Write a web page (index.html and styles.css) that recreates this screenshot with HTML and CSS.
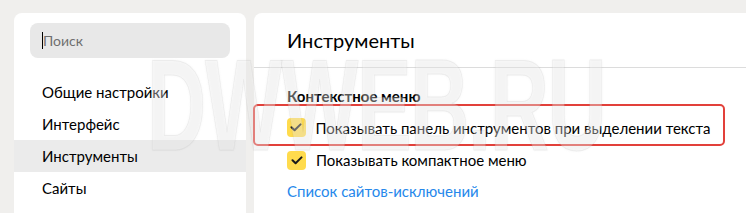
FILE: index.html
```html
<!DOCTYPE html>
<html lang="ru">
<head>
<meta charset="utf-8">
<link rel="stylesheet" href="styles.css">
</head>
<body>
<div class="page">
  <aside class="side">
    <div class="search"><span class="caret"></span><span class="ph">Поиск</span></div>
    <nav class="menu">
      <div class="item">Общие настройки</div>
      <div class="item">Интерфейс</div>
      <div class="item active">Инструменты</div>
      <div class="item">Сайты</div>
    </nav>
  </aside>
  <main class="main">
    <h1 class="title">Инструменты</h1>
    <div class="section">
      <h2 class="sub">Контекстное меню</h2>
      <div class="highlight">
        <label class="opt"><span class="cb"><svg width="12" height="9" viewBox="0 0 12 9"><path d="M1.5 4.2 L4.6 7.2 L10.5 1.4" fill="none" stroke="#1a1a1a" stroke-width="2" stroke-linecap="round" stroke-linejoin="round"/></svg></span>Показывать панель инструментов при выделении текста</label>
      </div>
      <label class="opt second"><span class="cb"><svg width="12" height="9" viewBox="0 0 12 9"><path d="M1.5 4.2 L4.6 7.2 L10.5 1.4" fill="none" stroke="#1a1a1a" stroke-width="2" stroke-linecap="round" stroke-linejoin="round"/></svg></span>Показывать компактное меню</label>
      <a class="link" href="#">Список сайтов-исключений</a>
    </div>
  </main>
  <div class="wm" aria-hidden="true">DWWEB.RU</div>
</div>
</body>
</html>
```
FILE: styles.css
```css
* { box-sizing: border-box; }
html, body { margin: 0; padding: 0; }
body {
  background: #f0efed;
  font-family: Lato, "Liberation Sans", sans-serif;
  color: #000;
  width: 746px;
  height: 213px;
  overflow: hidden;
}
.page {
  position: relative;
  display: flex;
  gap: 8px;
  padding: 13px 0 0 14px;
  height: 213px;
  overflow: hidden;
}
.side {
  width: 232px;
  flex: none;
  background: #fff;
  border-radius: 8px 8px 0 0;
  padding-top: 10px;
  height: 200px;
}
.search {
  margin: 0 16px;
  height: 35px;
  background: #e8e8e8;
  border-radius: 8px;
  display: flex;
  align-items: center;
  padding-left: 12px;
}
.caret {
  width: 1px;
  height: 17px;
  background: #000;
}
.ph {
  font-size: 14px;
  color: #6f6f6f;
}
.menu {
  margin-top: 18px;
}
.item {
  height: 32px;
  line-height: 32px;
  padding-left: 28px;
  font-size: 15px;
  white-space: nowrap;
}
.item.active { background: #ebebeb; }
.main {
  flex: 1;
  background: #fff;
  border-radius: 8px 0 0 0;
  height: 200px;
}
.title {
  margin: 0;
  font-weight: 400;
  font-size: 20px;
  height: 55px;
  line-height: 55px;
  padding-left: 33px;
  border-bottom: 1px solid #dcdcdc;
}
.section {
  padding: 19px 0 0 0;
}
.sub {
  margin: 0 0 0 33px;
  font-size: 15px;
  font-weight: 700;
  line-height: 18px;
}
.highlight {
  margin: -1px 0 0 -1px;
  width: 472px;
  height: 42px;
  border: 2.5px solid #e2403a;
  border-radius: 5px;
  padding: 11.5px 0 0 31.5px;
}
.opt {
  display: flex;
  align-items: center;
  font-size: 15px;
  line-height: 20px;
  white-space: nowrap;
}
.second {
  margin: 4px 0 0 33px;
}
.cb {
  width: 19px;
  height: 19px;
  border-radius: 4px;
  background: #ffdb4d;
  display: flex;
  align-items: center;
  justify-content: center;
  margin-right: 10px;
  flex: none;
}
.link {
  display: block;
  margin: 11px 0 0 33px;
  color: #2688eb;
  text-decoration: none;
  font-size: 15px;
  line-height: 20px;
}
.wm {
  position: absolute;
  left: 147px;
  top: 40px;
  font-family: "Liberation Sans", sans-serif;
  font-weight: 700;
  font-size: 130px;
  line-height: 1;
  letter-spacing: -2px;
  transform: scaleX(0.63);
  transform-origin: left top;
  color: rgba(255,255,255,0.28);
  -webkit-text-stroke: 1px rgba(160,160,160,0.14);
  text-shadow: 0 0 3px rgba(160,160,160,0.16);
  pointer-events: none;
  white-space: nowrap;
}
```
